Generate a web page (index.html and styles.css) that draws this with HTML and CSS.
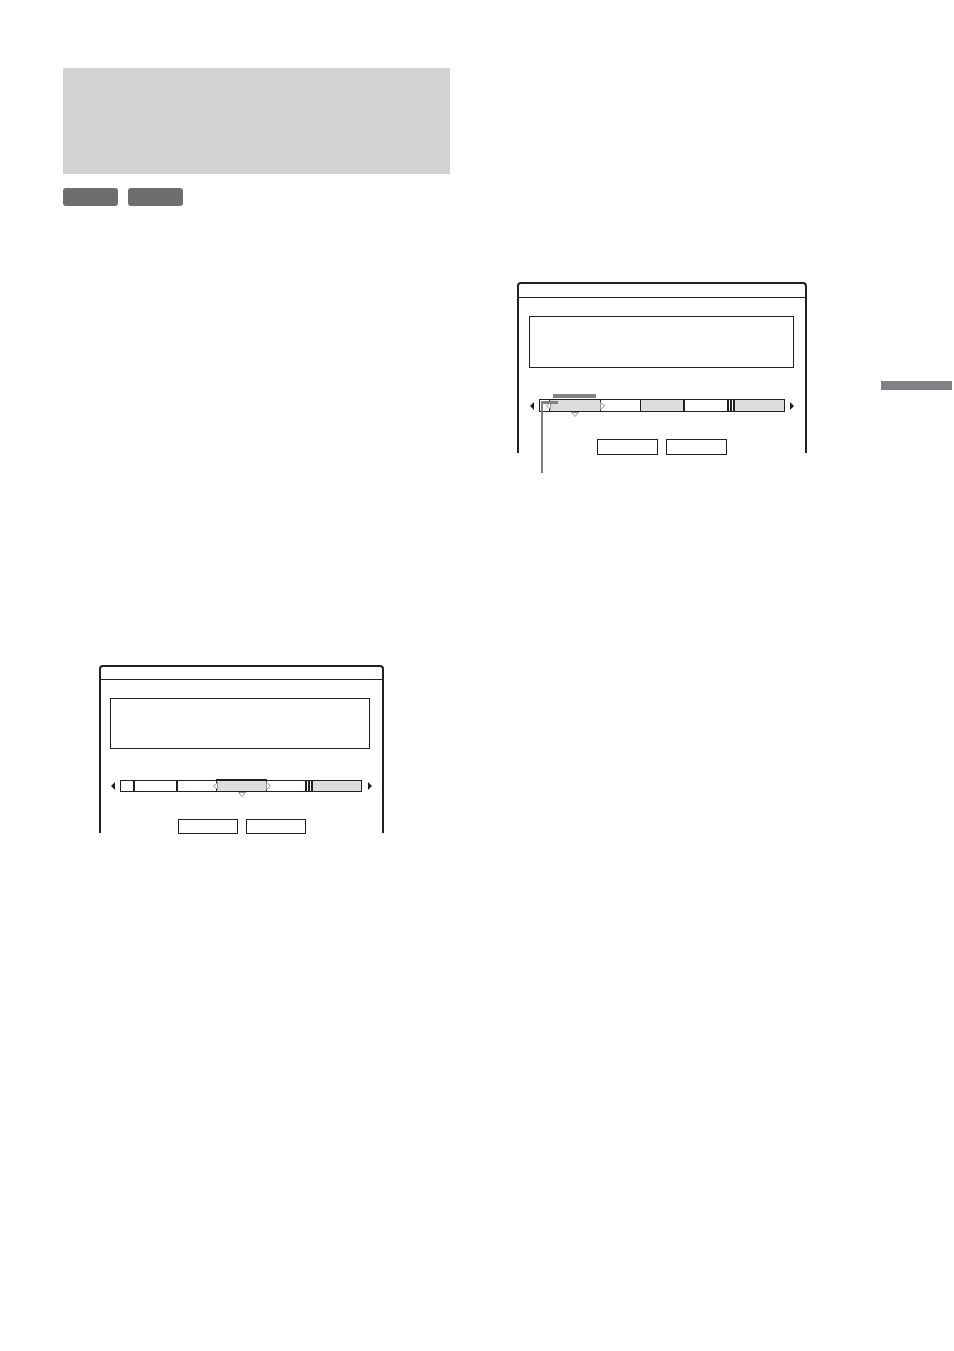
FILE: index.html
```html
<!DOCTYPE html>
<html lang="en">
<head>
    <meta charset="UTF-8">
    <meta name="viewport" content="width=device-width, initial-scale=1.0">
    <title>Chapter edit</title>
    <link rel="stylesheet" href="styles.css">
</head>
<body>

<div class="page">

    <div class="col-left">
        <div class="title-box"></div>
        <div class="badges">
            <span class="badge"></span>
            <span class="badge"></span>
        </div>

        <!-- screen: chapter in the middle selected -->
        <div class="screen screen-b">
            <div class="screen-head"></div>
            <div class="info-box"></div>
            <div class="timeline-row">
                <span class="arrow arrow-left"></span>
                <div class="bar">
                    <div class="seg" style="width:12px"></div>
                    <div class="seg thick" style="width:43px"></div>
                    <div class="seg thick" style="width:40px"></div>
                    <div class="seg selected top" style="width:51px">
                        <svg class="mark mark-l" width="5" height="8" viewBox="0 0 5 8"><polygon points="4.5,0.5 0.5,4 4.5,7.5" /></svg>
                        <svg class="mark mark-r" width="5" height="8" viewBox="0 0 5 8"><polygon points="0.5,0.5 4.5,4 0.5,7.5" /></svg>
                        <svg class="mark mark-d" width="8" height="5" viewBox="0 0 8 5"><polygon points="0.5,0.5 7.5,0.5 4,4.5" /></svg>
                    </div>
                    <div class="seg" style="width:38px"></div>
                    <div class="ticks"></div>
                    <div class="seg filled rest"></div>
                </div>
                <span class="arrow arrow-right"></span>
            </div>
            <div class="buttons">
                <span class="btn"></span>
                <span class="btn"></span>
            </div>
        </div>
    </div>

    <div class="col-right">
        <!-- screen: first chapter selected, with callout -->
        <div class="screen screen-a">
            <div class="screen-head"></div>
            <div class="info-box"></div>
            <div class="timeline-row">
                <span class="arrow arrow-left"></span>
                <div class="bar">
                    <div class="seg" style="width:9px"></div>
                    <div class="seg selected" style="width:52px">
                        <span class="sel-label"></span>
                        <svg class="mark mark-l" width="5" height="8" viewBox="0 0 5 8"><polygon points="4.5,0.5 0.5,4 4.5,7.5" /></svg>
                        <svg class="mark mark-r" width="5" height="8" viewBox="0 0 5 8"><polygon points="0.5,0.5 4.5,4 0.5,7.5" /></svg>
                        <svg class="mark mark-d" width="8" height="5" viewBox="0 0 8 5"><polygon points="0.5,0.5 7.5,0.5 4,4.5" /></svg>
                    </div>
                    <div class="seg" style="width:39px"></div>
                    <div class="seg filled thin" style="width:43px"></div>
                    <div class="seg thick" style="width:44px"></div>
                    <div class="ticks"></div>
                    <div class="seg filled rest"></div>
                </div>
                <span class="arrow arrow-right"></span>
            </div>
            <div class="buttons">
                <span class="btn"></span>
                <span class="btn"></span>
            </div>
            <span class="callout-h"></span>
            <span class="callout-v"></span>
        </div>
    </div>

    <div class="side-tab"></div>

</div>

</body>
</html>
```

FILE: styles.css
```css
body {
    margin: 0;
    background: #fff;
    font-family: "Liberation Sans", Arial, sans-serif;
}

.page {
    display: flex;
    align-items: flex-start;
    padding: 68px 0 0 63px;
    min-height: 1283px;
}

/* left column */
.col-left {
    width: 387px;
}

.title-box {
    height: 106px;
    background-color: #d1d2d4;
}

.badges {
    display: flex;
    gap: 10px;
    margin-top: 14px;
}

.badge {
    display: block;
    width: 55px;
    height: 18px;
    border-radius: 3px;
    background-color: #6d6e70;
}

/* right column */
.col-right {
    width: 290px;
    margin-left: 67px;
    padding-top: 214px;
}

.side-tab {
    width: 71px;
    height: 9px;
    margin-left: 74px;
    margin-top: 313px;
    background-color: #808285;
}

/* screens */
.screen {
    position: relative;
    box-sizing: border-box;
    border: 2px solid #231f20;
    border-bottom: none;
    border-radius: 4px 4px 0 0;
}

.screen-head {
    border-bottom: 1px solid #231f20;
}

.info-box {
    border: 1px solid #231f20;
    margin-top: 18px;
}

.timeline-row {
    display: flex;
    align-items: center;
    margin-top: 31px;
}

.arrow {
    display: block;
    width: 0;
    height: 0;
    border-top: 4px solid transparent;
    border-bottom: 4px solid transparent;
}

.arrow-left {
    border-right: 4px solid #231f20;
}

.arrow-right {
    border-left: 4px solid #231f20;
}

.bar {
    display: flex;
    box-sizing: border-box;
    border: 1px solid #231f20;
    background: #fff;
}

.seg {
    position: relative;
    box-sizing: border-box;
    flex: none;
}

.seg.thick {
    border-left: 2px solid #231f20;
}

.seg.thin {
    border-left: 1px solid #231f20;
}

.seg.filled {
    background-color: #dcddde;
}

.seg.rest {
    flex: 1;
}

.seg.selected {
    background-color: #dcddde;
    border-left: 1px solid #231f20;
    border-right: 1px solid #231f20;
}

.seg.selected.top {
    border-top: 2px solid #231f20;
    margin-top: -2px;
}

.ticks {
    flex: none;
    width: 9px;
    background: linear-gradient(to right,
        #231f20 0 2px, #fff 2px 3px,
        #231f20 3px 5px, #fff 5px 6px,
        #231f20 6px 8px, #dcddde 8px 9px);
}

.mark {
    position: absolute;
    top: 50%;
    margin-top: -4px;
}

.mark polygon {
    fill: #fff;
    stroke: #939598;
    stroke-width: 1;
}

.mark-l {
    left: -4px;
}

.mark-r {
    right: -5px;
}

.mark-d {
    top: 100%;
    left: 50%;
    margin-top: 1px;
    margin-left: -4px;
}

.buttons {
    display: flex;
    justify-content: center;
    gap: 8px;
    margin-top: 27px;
}

.btn {
    display: block;
    box-sizing: border-box;
    border: 1px solid #231f20;
}

/* screen in the left column */
.screen-b {
    width: 285px;
    height: 168px;
    margin: 459px 0 0 36px;
}

.screen-b .screen-head {
    height: 12px;
}

.screen-b .info-box {
    height: 49px;
    margin-left: 9px;
    margin-right: 12px;
}

.screen-b .timeline-row {
    padding-left: 10px;
}

.screen-b .bar {
    width: 242px;
    height: 12px;
    margin: 0 6px 0 5px;
}

.screen-b .btn {
    width: 60px;
    height: 15px;
}

/* screen in the right column */
.screen-a {
    width: 290px;
    height: 171px;
}

.screen-a .screen-head {
    height: 13px;
}

.screen-a .info-box {
    height: 50px;
    margin-left: 10px;
    margin-right: 11px;
}

.screen-a .timeline-row {
    padding-left: 11px;
}

.screen-a .bar {
    width: 246px;
    height: 13px;
    margin: 0 5px;
}

.screen-a .btn {
    width: 61px;
    height: 16px;
}

.sel-label {
    position: absolute;
    left: 3px;
    top: -6px;
    width: 43px;
    height: 4px;
    background-color: #808285;
}

.callout-h {
    position: absolute;
    left: 22px;
    top: 117px;
    width: 17px;
    height: 3px;
    background-color: #808285;
}

.callout-v {
    position: absolute;
    left: 22px;
    top: 117px;
    width: 2px;
    height: 72px;
    background-color: #808285;
}
```
